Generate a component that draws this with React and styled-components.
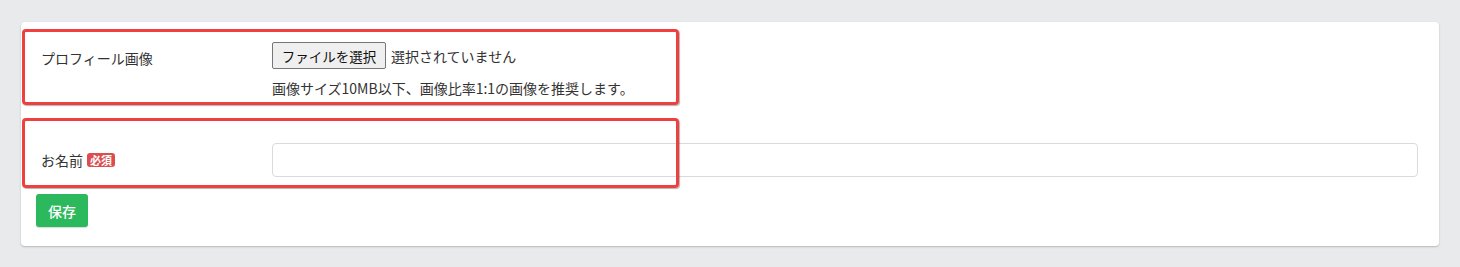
import React from "react";
import styled, { createGlobalStyle } from "styled-components";

const GlobalStyle = createGlobalStyle`
  html, body {
    margin: 0;
    padding: 0;
    background: #e9eaec;
  }
  body {
    font-family: "Noto Sans CJK JP", "Noto Sans", sans-serif;
    color: #333;
  }
`;

const Page = styled.div`
  padding: 22px 21px 21px 21px;
`;

const Card = styled.div`
  background: #fff;
  border-radius: 4px;
  box-shadow: 0 1px 2px rgba(0, 0, 0, 0.22);
  padding: 20px 21px 19px 15px;
`;

const Row = styled.div`
  position: relative;
  display: grid;
  grid-template-columns: 236px 1fr;
  align-items: ${(p) => (p.$top ? "start" : "center")};
  margin-bottom: ${(p) => p.$gap || 0}px;
`;

const Highlight = styled.div`
  position: absolute;
  left: -14px;
  width: 651px;
  top: ${(p) => p.$top}px;
  bottom: ${(p) => p.$bottom}px;
  border: 3.5px solid #ef3f3f;
  border-radius: 4px;
  box-shadow: 1px 1px 1px rgba(0, 0, 0, 0.3);
  pointer-events: none;
`;

const Label = styled.label`
  display: flex;
  align-items: center;
  gap: 4px;
  font-size: 14px;
  line-height: 20px;
  padding-left: 5px;
  padding-top: ${(p) => p.$pad || 0}px;
`;

const Badge = styled.span`
  display: inline-block;
  background: #dc4d4d;
  color: #fff;
  font-size: 11px;
  font-weight: 700;
  line-height: 14px;
  padding: 0 3px;
  border-radius: 3px;
`;

const Field = styled.div`
  display: flex;
  flex-direction: column;
`;

const FileLine = styled.div`
  display: flex;
  align-items: center;
  gap: 5px;
  font-size: 14px;
`;

const FileButton = styled.button`
  font-family: inherit;
  font-size: 13.5px;
  color: #111;
  height: 27px;
  width: 114px;
  padding: 0;
  background: #efefef;
  border: 1px solid #767676;
  border-radius: 2px;
`;

const Help = styled.p`
  margin: 10px 0 0;
  font-size: 14px;
  line-height: 19px;
`;

const TextInput = styled.input`
  box-sizing: border-box;
  width: 100%;
  height: 34px;
  border: 1px solid #dadada;
  border-radius: 4px;
  outline: none;
  font-family: inherit;
  font-size: 14px;
  padding: 0 10px;
`;

const SaveButton = styled.button`
  font-family: inherit;
  font-size: 14px;
  font-weight: 500;
  color: #fff;
  background: #2cb85c;
  border: none;
  border-radius: 3px;
  height: 33px;
  width: 52px;
  padding: 0;
  box-shadow: 0 1px 1px rgba(0, 0, 0, 0.15);
`;

export default function App() {
  return (
    <Page>
      <GlobalStyle />
      <Card>
        <Row $top $gap={45}>
          <Highlight $top={-13} $bottom={-7} />
          <Label $pad={6}>プロフィール画像</Label>
          <Field>
            <FileLine>
              <FileButton type="button">ファイルを選択</FileButton>
              <span>選択されていません</span>
            </FileLine>
            <Help>画像サイズ10MB以下、画像比率1:1の画像を推奨します。</Help>
          </Field>
        </Row>
        <Row $gap={17}>
          <Highlight $top={-25} $bottom={-11} />
          <Label>
            お名前<Badge>必須</Badge>
          </Label>
          <TextInput type="text" />
        </Row>
        <SaveButton type="button">保存</SaveButton>
      </Card>
    </Page>
  );
}
